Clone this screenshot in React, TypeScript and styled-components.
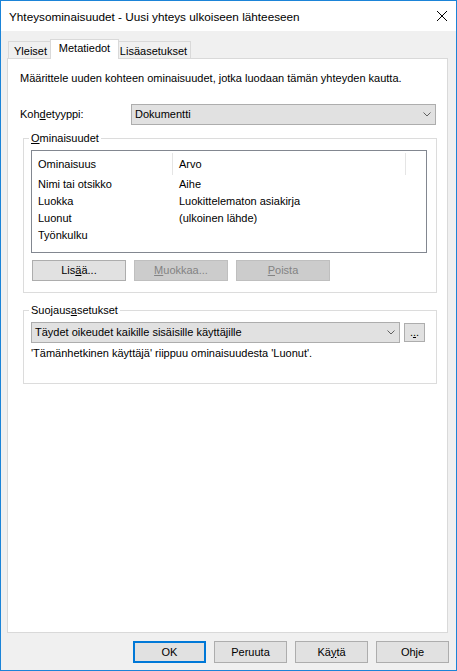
import styled, { createGlobalStyle } from "styled-components";

const GlobalStyle = createGlobalStyle`
  html, body {
    margin: 0;
    padding: 0;
    background: #f0f0f0;
  }
  body {
    font-family: "Liberation Sans", Arial, sans-serif;
    font-size: 11px;
    color: #000;
  }
  *, *::before, *::after {
    box-sizing: border-box;
  }
`;

const Window = styled.div`
  width: 457px;
  height: 671px;
  border: 1px solid #1b84d8;
  background: #f0f0f0;
  display: flex;
  flex-direction: column;
  overflow: hidden;
`;

const TitleBar = styled.div`
  height: 30px;
  flex: none;
  display: flex;
  align-items: center;
  background: #fff;
  padding-left: 8px;
  line-height: 15px;
`;

const TitleText = styled.span`
  flex: 1;
  font-size: 11.75px;
  white-space: nowrap;
`;

const CloseBox = styled.div`
  width: 29px;
  height: 30px;
  display: flex;
  align-items: center;
  justify-content: center;
`;

const TabStrip = styled.div`
  height: 27px;
  flex: none;
  display: flex;
  align-items: flex-end;
  padding-left: 7px;
  position: relative;
  z-index: 1;
`;

const Tab = styled.div<{ $w: number; $active?: boolean }>`
  width: ${(p) => (p.$active ? p.$w + 4 : p.$w)}px;
  height: ${(p) => (p.$active ? 20 : 17)}px;
  margin: 0 ${(p) => (p.$active ? -2 : 0)}px ${(p) => (p.$active ? -1 : 0)}px
    ${(p) => (p.$active ? -3 : -1)}px;
  padding-top: ${(p) => (p.$active ? 1 : 2)}px;
  border: 1px solid #d9d9d9;
  border-bottom: none;
  background: ${(p) => (p.$active ? "#fff" : "#f0f0f0")};
  text-align: center;
  line-height: 15px;
  white-space: nowrap;
  position: relative;
  z-index: ${(p) => (p.$active ? 2 : 1)};
  &:first-child {
    margin-left: 0;
  }
`;

const Panel = styled.div`
  flex: 1;
  min-height: 0;
  margin: 0 8px 0 6px;
  background: #fff;
  border: 1px solid #d9d9d9;
  padding: 12px 10px 0 12px;
  display: flex;
  flex-direction: column;
`;

const Text = styled.div<{ $mt?: number }>`
  line-height: 15px;
  margin-top: ${(p) => p.$mt ?? 0}px;
  white-space: nowrap;
`;

const FieldRow = styled.div`
  display: flex;
  align-items: center;
  margin-top: 18px;
  margin-right: 1px;
`;

const FieldLabel = styled.label`
  width: 111px;
  flex: none;
  line-height: 15px;
`;

const Combo = styled.div`
  flex: 1;
  height: 21px;
  display: flex;
  align-items: center;
  background: #e1e1e1;
  border: 1px solid #adadad;
  padding: 0 4px 0 3px;
  line-height: 15px;
`;

const ComboText = styled.span`
  flex: 1;
  white-space: nowrap;
`;

const Group = styled.fieldset<{ $mt: number; $pb: number }>`
  margin: ${(p) => p.$mt}px 0 0 3px;
  padding: 4px 9px ${(p) => p.$pb}px 7px;
  border: 1px solid #dcdcdc;
  min-width: 0;
`;

const Legend = styled.legend`
  margin-left: -2px;
  padding: 0 2px;
  line-height: 15px;
`;

const ListView = styled.div`
  height: 103px;
  border: 1px solid #828790;
  background: #fff;
`;

const HeaderRow = styled.div`
  display: grid;
  grid-template-columns: 141px 233px 1fr;
  padding: 2px 0 1px;
`;

const HeaderCell = styled.div<{ $last?: boolean }>`
  height: 22px;
  line-height: 22px;
  padding-left: 6px;
  border-right: ${(p) => (p.$last ? "none" : "1px solid #e5e5e5")};
`;

const Row = styled.div`
  display: grid;
  grid-template-columns: 141px 233px 1fr;
  height: 17px;
  line-height: 17px;
`;

const Cell = styled.div`
  padding-left: 6px;
  white-space: nowrap;
`;

const ButtonRow = styled.div`
  display: flex;
  gap: 8px;
  margin-top: 7px;
  padding-left: 1px;
`;

const ComboRow = styled.div`
  display: flex;
  align-items: center;
  gap: 4px;
`;

const Button = styled.button<{ $w: number; $h: number; $default?: boolean }>`
  width: ${(p) => p.$w}px;
  height: ${(p) => p.$h}px;
  flex: none;
  padding: 0;
  margin: 0;
  font: inherit;
  line-height: 15px;
  color: #000;
  background: #e1e1e1;
  border: ${(p) => (p.$default ? "2px solid #0078d7" : "1px solid #adadad")};
  &:disabled {
    background: #cccccc;
    border-color: #bfbfbf;
    color: #838383;
  }
`;

const Footer = styled.div`
  height: 37px;
  flex: none;
  display: flex;
  justify-content: flex-end;
  gap: 8px;
  padding: 8px 7px 0 0;
`;

const Chevron = () => (
  <svg width="8" height="5" viewBox="0 0 8 5">
    <polyline points="0.5,0.5 4,4 7.5,0.5" fill="none" stroke="#606060" strokeWidth="1" />
  </svg>
);

const rows = [
  ["Nimi tai otsikko", "Aihe"],
  ["Luokka", "Luokittelematon asiakirja"],
  ["Luonut", "(ulkoinen lähde)"],
  ["Työnkulku", ""],
];

export default function App() {
  return (
    <>
      <GlobalStyle />
      <Window>
        <TitleBar>
          <TitleText>Yhteysominaisuudet - Uusi yhteys ulkoiseen lähteeseen</TitleText>
          <CloseBox>
            <svg width="10" height="10" viewBox="0 0 10 10">
              <path d="M0 0L10 10M10 0L0 10" stroke="#000" strokeWidth="1" fill="none" />
            </svg>
          </CloseBox>
        </TitleBar>

        <TabStrip>
          <Tab $w={45}>Yleiset</Tab>
          <Tab $w={65} $active>
            Metatiedot
          </Tab>
          <Tab $w={75}>Lisäasetukset</Tab>
        </TabStrip>

        <Panel>
          <Text>Määrittele uuden kohteen ominaisuudet, jotka luodaan tämän yhteyden kautta.</Text>

          <FieldRow>
            <FieldLabel>
              Koh<u>d</u>etyyppi:
            </FieldLabel>
            <Combo>
              <ComboText>Dokumentti</ComboText>
              <Chevron />
            </Combo>
          </FieldRow>

          <Group $mt={6} $pb={11}>
            <Legend>
              <u>O</u>minaisuudet
            </Legend>
            <ListView>
              <HeaderRow>
                <HeaderCell>Ominaisuus</HeaderCell>
                <HeaderCell>Arvo</HeaderCell>
                <HeaderCell $last />
              </HeaderRow>
              {rows.map(([name, value]) => (
                <Row key={name}>
                  <Cell>{name}</Cell>
                  <Cell>{value}</Cell>
                  <Cell />
                </Row>
              ))}
            </ListView>
            <ButtonRow>
              <Button $w={94} $h={21}>
                Lis<u>ä</u>ä...
              </Button>
              <Button $w={94} $h={21} disabled>
                <u>M</u>uokkaa...
              </Button>
              <Button $w={94} $h={21} disabled>
                <u>P</u>oista
              </Button>
            </ButtonRow>
          </Group>

          <Group $mt={10} $pb={22}>
            <Legend>
              Suojaus<u>a</u>setukset
            </Legend>
            <ComboRow>
              <Combo>
                <ComboText>Täydet oikeudet kaikille sisäisille käyttäjille</ComboText>
                <Chevron />
              </Combo>
              <Button $w={21} $h={19} style={{ marginRight: 2 }}>
                .<u>.</u>.
              </Button>
            </ComboRow>
            <Text $mt={3}>'Tämänhetkinen käyttäjä' riippuu ominaisuudesta 'Luonut'.</Text>
          </Group>
        </Panel>

        <Footer>
          <Button $w={73} $h={22} $default>
            OK
          </Button>
          <Button $w={73} $h={22}>
            Peruuta
          </Button>
          <Button $w={73} $h={22}>
            Kä<u>y</u>tä
          </Button>
          <Button $w={73} $h={22}>
            Ohje
          </Button>
        </Footer>
      </Window>
    </>
  );
}
